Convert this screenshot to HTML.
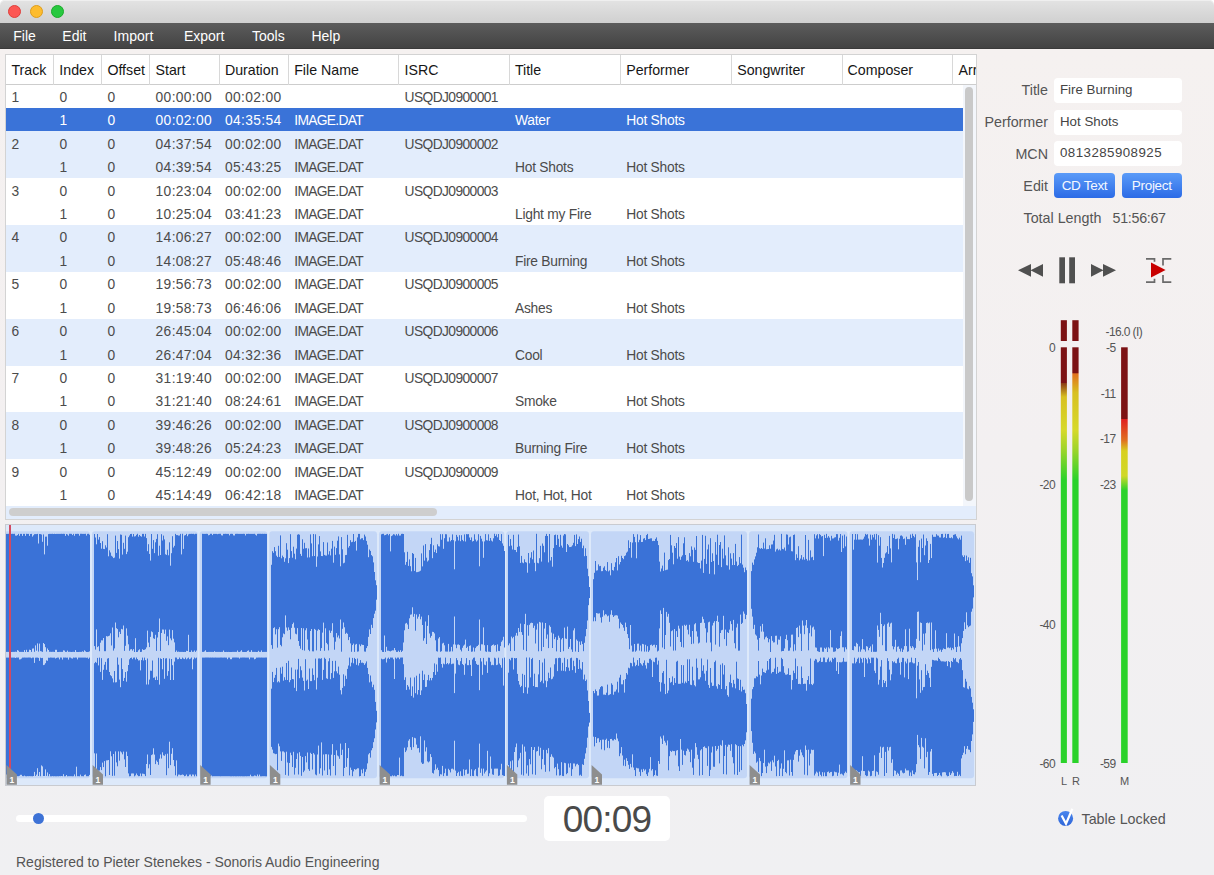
<!DOCTYPE html>
<html><head><meta charset="utf-8">
<style>
*{margin:0;padding:0;box-sizing:border-box}
html,body{width:1214px;height:875px;overflow:hidden}
body{background:linear-gradient(#f5f1f0 50px,#f3f0f1 450px,#f0f0f2 875px);font-family:"Liberation Sans",sans-serif;position:relative;color:#333}
.abs{position:absolute}
#titlebar{position:absolute;left:0;top:0;width:1214px;height:23px;background:linear-gradient(#e3e3e3,#d0d0d0);border-radius:5px 5px 0 0;box-shadow:inset 0 1px #efefef}
.tl{position:absolute;top:5.2px;width:13px;height:13px;border-radius:50%}
#menubar{position:absolute;left:0;top:23px;width:1214px;height:26px;background:linear-gradient(#5c5c5c,#434343);border-bottom:1px solid #3a3a3a}
.mi{position:absolute;top:4.3px;color:#fff;font-size:14px;line-height:18px}
#table{position:absolute;left:5px;top:54px;height:465.5px;background:#fff;border:1px solid #d3d3d3;overflow:hidden;width:971.5px}
#hdr{position:absolute;left:0;top:0;width:1000px;height:29.6px;background:#fff;border-bottom:1px solid #cdcdcd}
.hc{position:absolute;top:0;height:29.6px;border-right:1px solid #d8d8d8;font-size:14.2px;color:#161616;padding-left:5px;line-height:31px;white-space:nowrap;overflow:hidden}
#rows{position:absolute;left:0;top:29.6px;width:957px;height:422px}
.row{position:absolute;left:0;width:957px;height:23.42px}
.even{background:#fff}
.odd{background:#e3edfc}
.sel{background:#3a73d8}
.d{position:absolute;font-size:13.8px;color:#4b4b4b;line-height:23.42px;margin-top:1.4px;white-space:nowrap;letter-spacing:-0.25px}
.d.n{letter-spacing:0.35px}
.d.img{letter-spacing:-0.7px}
.d.isrc{letter-spacing:-0.6px}
.d.s{color:#fff}
#vscroll{position:absolute;left:957px;top:29.6px;width:14px;height:421px;background:#f3f6fb}
#vthumb{position:absolute;left:1.5px;top:2.5px;width:8px;height:414px;border-radius:4px;background:#c9c9c9}
#hscroll{position:absolute;left:0;top:450.5px;width:971px;height:14px;background:#e3edfc}
#hthumb{position:absolute;left:3.4px;top:2.4px;width:428px;height:8px;border-radius:4px;background:#cecece}
#wave{position:absolute;left:5px;top:523.7px;width:971px;height:262px;border:1px solid #c9cbd0;background:#dde9fa;overflow:hidden}
#slider{position:absolute;left:16px;top:815px;width:511px;height:7px;border-radius:4px;background:#fff}
#knob{position:absolute;left:32.5px;top:813.3px;width:11px;height:11px;border-radius:50%;background:#3d72d6}
#timebox{position:absolute;left:544px;top:796px;width:126px;height:45px;border-radius:5px;background:#fff}
#time{position:absolute;left:0;top:0.7px;width:126px;height:45px;text-align:center;font-size:37px;line-height:45px;color:#4a4a4a;letter-spacing:-0.8px}
#reg{position:absolute;left:16px;top:853px;font-size:14px;line-height:18px;color:#555;white-space:nowrap}
.lbl{position:absolute;font-size:14.3px;color:#555;text-align:right;line-height:18px;white-space:nowrap}
.inp{position:absolute;left:1054px;width:128px;height:25px;background:#fff;border-radius:4px;font-size:13.3px;color:#444;padding-left:6px;line-height:23px;white-space:nowrap}
.btn{position:absolute;top:172.5px;height:25px;border-radius:4px;background:linear-gradient(#5b9bf8,#2c6be6);color:#f4f8ff;font-size:13.5px;line-height:25px;text-align:center;letter-spacing:-0.3px}
.ml{position:absolute;font-size:12px;color:#555;line-height:12px;white-space:nowrap;letter-spacing:-0.6px}
</style></head><body>
<div style="position:absolute;left:0;top:0;width:1214px;height:8px;background:#fff"></div>
<div id="titlebar">
 <div class="tl" style="left:8.4px;background:#fc5753;border:0.5px solid #df3f3b"></div>
 <div class="tl" style="left:29.5px;background:#fdbc2e;border:0.5px solid #de9d1b"></div>
 <div class="tl" style="left:50.7px;background:#28c840;border:0.5px solid #1aab29"></div>
</div>
<div id="menubar">
 <div class="mi" style="left:13.3px">File</div>
 <div class="mi" style="left:62.3px">Edit</div>
 <div class="mi" style="left:113.6px">Import</div>
 <div class="mi" style="left:183.9px">Export</div>
 <div class="mi" style="left:252px">Tools</div>
 <div class="mi" style="left:311.4px">Help</div>
</div>

<div id="table">
 <div id="hdr"><div class="hc" style="left:0.4px;width:47.9px">Track</div><div class="hc" style="left:48.3px;width:48.1px">Index</div><div class="hc" style="left:96.4px;width:48.1px">Offset</div><div class="hc" style="left:144.5px;width:69.4px">Start</div><div class="hc" style="left:213.9px;width:69.3px">Duration</div><div class="hc" style="left:283.2px;width:110.3px">File Name</div><div class="hc" style="left:393.5px;width:110.4px">ISRC</div><div class="hc" style="left:503.9px;width:111.3px">Title</div><div class="hc" style="left:615.2px;width:111.0px">Performer</div><div class="hc" style="left:726.2px;width:110.4px">Songwriter</div><div class="hc" style="left:836.6px;width:110.9px">Composer</div><div class="hc" style="left:947.5px;width:47.4px">Arr</div></div>
 <div id="rows"><div class="row even" style="top:0.00px"></div><div class="row sel" style="top:23.42px"></div><div class="row odd" style="top:46.84px"></div><div class="row odd" style="top:70.26px"></div><div class="row even" style="top:93.68px"></div><div class="row even" style="top:117.10px"></div><div class="row odd" style="top:140.52px"></div><div class="row odd" style="top:163.94px"></div><div class="row even" style="top:187.36px"></div><div class="row even" style="top:210.78px"></div><div class="row odd" style="top:234.20px"></div><div class="row odd" style="top:257.62px"></div><div class="row even" style="top:281.04px"></div><div class="row even" style="top:304.46px"></div><div class="row odd" style="top:327.88px"></div><div class="row odd" style="top:351.30px"></div><div class="row even" style="top:374.72px"></div><div class="row even" style="top:398.14px"></div><div class="d n" style="left:5.5px;top:0.0px">1</div><div class="d n" style="left:53.4px;top:0.0px">0</div><div class="d n" style="left:101.5px;top:0.0px">0</div><div class="d n" style="left:149.6px;top:0.0px">00:00:00</div><div class="d n" style="left:219.0px;top:0.0px">00:02:00</div><div class="d isrc" style="left:398.6px;top:0.0px">USQDJ0900001</div><div class="d s n" style="left:53.4px;top:23.4px">1</div><div class="d s n" style="left:101.5px;top:23.4px">0</div><div class="d s n" style="left:149.6px;top:23.4px">00:02:00</div><div class="d s n" style="left:219.0px;top:23.4px">04:35:54</div><div class="d s img" style="left:288.3px;top:23.4px">IMAGE.DAT</div><div class="d s" style="left:509.0px;top:23.4px">Water</div><div class="d s" style="left:620.3px;top:23.4px">Hot Shots</div><div class="d n" style="left:5.5px;top:46.8px">2</div><div class="d n" style="left:53.4px;top:46.8px">0</div><div class="d n" style="left:101.5px;top:46.8px">0</div><div class="d n" style="left:149.6px;top:46.8px">04:37:54</div><div class="d n" style="left:219.0px;top:46.8px">00:02:00</div><div class="d isrc" style="left:398.6px;top:46.8px">USQDJ0900002</div><div class="d img" style="left:288.3px;top:46.8px">IMAGE.DAT</div><div class="d n" style="left:53.4px;top:70.3px">1</div><div class="d n" style="left:101.5px;top:70.3px">0</div><div class="d n" style="left:149.6px;top:70.3px">04:39:54</div><div class="d n" style="left:219.0px;top:70.3px">05:43:25</div><div class="d img" style="left:288.3px;top:70.3px">IMAGE.DAT</div><div class="d" style="left:509.0px;top:70.3px">Hot Shots</div><div class="d" style="left:620.3px;top:70.3px">Hot Shots</div><div class="d n" style="left:5.5px;top:93.7px">3</div><div class="d n" style="left:53.4px;top:93.7px">0</div><div class="d n" style="left:101.5px;top:93.7px">0</div><div class="d n" style="left:149.6px;top:93.7px">10:23:04</div><div class="d n" style="left:219.0px;top:93.7px">00:02:00</div><div class="d isrc" style="left:398.6px;top:93.7px">USQDJ0900003</div><div class="d img" style="left:288.3px;top:93.7px">IMAGE.DAT</div><div class="d n" style="left:53.4px;top:117.1px">1</div><div class="d n" style="left:101.5px;top:117.1px">0</div><div class="d n" style="left:149.6px;top:117.1px">10:25:04</div><div class="d n" style="left:219.0px;top:117.1px">03:41:23</div><div class="d img" style="left:288.3px;top:117.1px">IMAGE.DAT</div><div class="d" style="left:509.0px;top:117.1px">Light my Fire</div><div class="d" style="left:620.3px;top:117.1px">Hot Shots</div><div class="d n" style="left:5.5px;top:140.5px">4</div><div class="d n" style="left:53.4px;top:140.5px">0</div><div class="d n" style="left:101.5px;top:140.5px">0</div><div class="d n" style="left:149.6px;top:140.5px">14:06:27</div><div class="d n" style="left:219.0px;top:140.5px">00:02:00</div><div class="d isrc" style="left:398.6px;top:140.5px">USQDJ0900004</div><div class="d img" style="left:288.3px;top:140.5px">IMAGE.DAT</div><div class="d n" style="left:53.4px;top:163.9px">1</div><div class="d n" style="left:101.5px;top:163.9px">0</div><div class="d n" style="left:149.6px;top:163.9px">14:08:27</div><div class="d n" style="left:219.0px;top:163.9px">05:48:46</div><div class="d img" style="left:288.3px;top:163.9px">IMAGE.DAT</div><div class="d" style="left:509.0px;top:163.9px">Fire Burning</div><div class="d" style="left:620.3px;top:163.9px">Hot Shots</div><div class="d n" style="left:5.5px;top:187.4px">5</div><div class="d n" style="left:53.4px;top:187.4px">0</div><div class="d n" style="left:101.5px;top:187.4px">0</div><div class="d n" style="left:149.6px;top:187.4px">19:56:73</div><div class="d n" style="left:219.0px;top:187.4px">00:02:00</div><div class="d isrc" style="left:398.6px;top:187.4px">USQDJ0900005</div><div class="d img" style="left:288.3px;top:187.4px">IMAGE.DAT</div><div class="d n" style="left:53.4px;top:210.8px">1</div><div class="d n" style="left:101.5px;top:210.8px">0</div><div class="d n" style="left:149.6px;top:210.8px">19:58:73</div><div class="d n" style="left:219.0px;top:210.8px">06:46:06</div><div class="d img" style="left:288.3px;top:210.8px">IMAGE.DAT</div><div class="d" style="left:509.0px;top:210.8px">Ashes</div><div class="d" style="left:620.3px;top:210.8px">Hot Shots</div><div class="d n" style="left:5.5px;top:234.2px">6</div><div class="d n" style="left:53.4px;top:234.2px">0</div><div class="d n" style="left:101.5px;top:234.2px">0</div><div class="d n" style="left:149.6px;top:234.2px">26:45:04</div><div class="d n" style="left:219.0px;top:234.2px">00:02:00</div><div class="d isrc" style="left:398.6px;top:234.2px">USQDJ0900006</div><div class="d img" style="left:288.3px;top:234.2px">IMAGE.DAT</div><div class="d n" style="left:53.4px;top:257.6px">1</div><div class="d n" style="left:101.5px;top:257.6px">0</div><div class="d n" style="left:149.6px;top:257.6px">26:47:04</div><div class="d n" style="left:219.0px;top:257.6px">04:32:36</div><div class="d img" style="left:288.3px;top:257.6px">IMAGE.DAT</div><div class="d" style="left:509.0px;top:257.6px">Cool</div><div class="d" style="left:620.3px;top:257.6px">Hot Shots</div><div class="d n" style="left:5.5px;top:281.0px">7</div><div class="d n" style="left:53.4px;top:281.0px">0</div><div class="d n" style="left:101.5px;top:281.0px">0</div><div class="d n" style="left:149.6px;top:281.0px">31:19:40</div><div class="d n" style="left:219.0px;top:281.0px">00:02:00</div><div class="d isrc" style="left:398.6px;top:281.0px">USQDJ0900007</div><div class="d img" style="left:288.3px;top:281.0px">IMAGE.DAT</div><div class="d n" style="left:53.4px;top:304.5px">1</div><div class="d n" style="left:101.5px;top:304.5px">0</div><div class="d n" style="left:149.6px;top:304.5px">31:21:40</div><div class="d n" style="left:219.0px;top:304.5px">08:24:61</div><div class="d img" style="left:288.3px;top:304.5px">IMAGE.DAT</div><div class="d" style="left:509.0px;top:304.5px">Smoke</div><div class="d" style="left:620.3px;top:304.5px">Hot Shots</div><div class="d n" style="left:5.5px;top:327.9px">8</div><div class="d n" style="left:53.4px;top:327.9px">0</div><div class="d n" style="left:101.5px;top:327.9px">0</div><div class="d n" style="left:149.6px;top:327.9px">39:46:26</div><div class="d n" style="left:219.0px;top:327.9px">00:02:00</div><div class="d isrc" style="left:398.6px;top:327.9px">USQDJ0900008</div><div class="d img" style="left:288.3px;top:327.9px">IMAGE.DAT</div><div class="d n" style="left:53.4px;top:351.3px">1</div><div class="d n" style="left:101.5px;top:351.3px">0</div><div class="d n" style="left:149.6px;top:351.3px">39:48:26</div><div class="d n" style="left:219.0px;top:351.3px">05:24:23</div><div class="d img" style="left:288.3px;top:351.3px">IMAGE.DAT</div><div class="d" style="left:509.0px;top:351.3px">Burning Fire</div><div class="d" style="left:620.3px;top:351.3px">Hot Shots</div><div class="d n" style="left:5.5px;top:374.7px">9</div><div class="d n" style="left:53.4px;top:374.7px">0</div><div class="d n" style="left:101.5px;top:374.7px">0</div><div class="d n" style="left:149.6px;top:374.7px">45:12:49</div><div class="d n" style="left:219.0px;top:374.7px">00:02:00</div><div class="d isrc" style="left:398.6px;top:374.7px">USQDJ0900009</div><div class="d img" style="left:288.3px;top:374.7px">IMAGE.DAT</div><div class="d n" style="left:53.4px;top:398.1px">1</div><div class="d n" style="left:101.5px;top:398.1px">0</div><div class="d n" style="left:149.6px;top:398.1px">45:14:49</div><div class="d n" style="left:219.0px;top:398.1px">06:42:18</div><div class="d img" style="left:288.3px;top:398.1px">IMAGE.DAT</div><div class="d" style="left:509.0px;top:398.1px">Hot, Hot, Hot</div><div class="d" style="left:620.3px;top:398.1px">Hot Shots</div>
 </div>
 <div id="vscroll"><div id="vthumb"></div></div>
 <div id="hscroll"><div id="hthumb"></div></div>
</div>

<div id="wave">
<svg width="970" height="262" viewBox="6 524.7 970 262" style="position:absolute;left:0;top:0">
<rect x="4.4" y="531" width="85.6" height="247" rx="3" fill="#c3d6f6"/><rect x="92.0" y="531" width="105.6" height="247" rx="3" fill="#c3d6f6"/><rect x="199.6" y="531" width="67.7" height="247" rx="3" fill="#c3d6f6"/><rect x="269.3" y="531" width="107.7" height="247" rx="3" fill="#c3d6f6"/><rect x="379.0" y="531" width="125.3" height="247" rx="3" fill="#c3d6f6"/><rect x="506.3" y="531" width="82.7" height="247" rx="3" fill="#c3d6f6"/><rect x="591.0" y="531" width="156.0" height="247" rx="3" fill="#c3d6f6"/><rect x="749.0" y="531" width="98.5" height="247" rx="3" fill="#c3d6f6"/><rect x="849.5" y="531" width="124.5" height="247" rx="3" fill="#c3d6f6"/>
<path d="M6.5 533.6V651.6M6.5 657.3V774.2M7.5 533.6V651.6M7.5 657.3V775.9M8.5 533.5V651.6M8.5 657.3V775.9M9.5 533.5V651.7M9.5 657.2V775.9M10.5 539.5V650.2M10.5 657.2V774.3M11.5 533.6V651.7M11.5 657.3V775.9M12.5 533.5V651.6M12.5 657.3V775.9M13.5 533.6V651.6M13.5 657.3V776.0M14.5 533.5V651.6M14.5 657.3V776.0M15.5 535.3V651.4M15.5 657.7V776.0M16.5 535.4V651.6M16.5 657.2V776.0M17.5 534.8V649.8M17.5 657.3V775.9M18.5 533.6V650.4M18.5 657.2V775.9M19.5 535.5V651.6M19.5 659.2V775.5M20.5 533.6V651.6M20.5 659.0V774.5M21.5 533.6V651.6M21.5 658.3V774.5M22.5 535.6V651.6M22.5 657.3V775.8M23.5 533.6V651.7M23.5 657.3V775.9M24.5 533.6V649.8M24.5 657.2V775.3M25.5 535.6V651.7M25.5 657.3V775.9M26.5 533.5V649.5M26.5 657.3V776.0M27.5 533.6V651.7M27.5 657.3V775.8M28.5 533.6V651.6M28.5 657.2V775.9M29.5 535.6V649.4M29.5 657.2V775.8M30.5 533.7V649.7M30.5 657.3V775.9M31.5 533.6V651.6M31.5 657.9V775.9M32.5 536.3V648.3M32.5 657.3V776.0M33.5 535.0V648.1M33.5 657.3V775.7M34.5 533.9V651.5M34.5 662.6V771.6M35.5 533.8V645.1M35.5 657.4V775.7M36.5 533.8V650.4M36.5 657.3V774.3M37.5 533.6V643.1M37.5 657.3V767.9M38.5 543.2V651.3M38.5 657.6V775.7M39.5 533.7V643.3M39.5 660.6V771.7M40.5 533.8V650.8M40.5 657.4V775.9M41.5 534.2V651.1M41.5 657.8V765.1M42.5 541.5V651.6M42.5 657.6V766.1M43.5 534.1V642.7M43.5 664.8V775.7M44.5 554.1V643.8M44.5 664.4V775.7M45.5 536.4V646.9M45.5 662.9V769.1M46.5 536.3V651.3M46.5 660.1V775.6M47.5 545.4V648.2M47.5 660.5V772.1M48.5 533.8V649.7M48.5 657.4V775.9M49.5 533.6V651.5M49.5 657.5V773.8M50.5 533.6V651.5M50.5 657.2V776.0M51.5 533.6V651.6M51.5 657.3V776.0M52.5 533.5V651.5M52.5 657.4V775.8M53.5 533.7V651.5M53.5 657.4V776.0M54.5 533.5V651.7M54.5 657.3V775.9M55.5 533.7V649.5M55.5 658.2V776.0M56.5 533.6V649.5M56.5 657.6V776.0M57.5 533.6V651.7M57.5 657.3V775.9M58.5 533.6V651.7M58.5 657.3V776.0M59.5 533.6V651.6M59.5 659.1V775.8M60.5 533.6V651.6M60.5 657.2V775.9M61.5 533.5V651.6M61.5 657.3V775.7M62.5 533.6V651.6M62.5 659.3V775.9M63.5 533.5V650.0M63.5 657.2V773.9M64.5 533.6V650.3M64.5 657.3V776.0M65.5 535.6V651.6M65.5 657.2V775.9M66.5 533.7V651.6M66.5 657.4V774.7M67.5 534.2V650.3M67.5 657.3V776.0M68.5 535.4V651.6M68.5 659.3V775.9M69.5 533.5V651.5M69.5 657.2V775.9M70.5 533.5V651.6M70.5 657.3V775.9M71.5 533.6V651.7M71.5 658.0V775.9M72.5 534.8V651.6M72.5 658.3V776.0M73.5 533.6V651.5M73.5 657.2V775.9M74.5 535.5V651.7M74.5 657.4V774.1M75.5 533.6V649.8M75.5 657.2V776.0M76.5 533.6V651.6M76.5 657.3V766.4M77.5 533.5V651.7M77.5 659.1V775.9M78.5 533.6V651.7M78.5 657.3V775.9M79.5 535.4V651.6M79.5 657.3V776.0M80.5 533.5V651.6M80.5 657.3V774.3M81.5 533.5V651.6M81.5 657.3V775.9M82.5 533.6V651.0M82.5 657.3V775.9M83.5 533.6V651.6M83.5 657.3V776.0M84.5 533.6V650.0M84.5 657.3V774.6M85.5 533.5V651.0M85.5 657.3V774.2M86.5 535.3V651.7M86.5 657.5V775.9M87.5 533.6V651.7M87.5 657.3V775.9M88.5 533.5V651.6M88.5 658.5V775.9M89.5 534.4V651.1M89.5 657.3V774.6M94.5 533.7V645.8M94.5 662.9V753.0M95.5 537.2V649.3M95.5 661.6V775.6M96.5 544.0V629.1M96.5 662.5V753.2M97.5 533.7V646.8M97.5 657.6V775.6M98.5 539.3V645.9M98.5 665.1V770.4M99.5 536.8V650.9M99.5 657.3V770.2M100.5 542.7V642.4M100.5 671.6V766.8M101.5 548.4V640.0M101.5 657.9V769.8M102.5 540.9V640.1M102.5 679.6V762.3M103.5 548.6V637.7M103.5 669.5V766.8M104.5 548.8V650.9M104.5 664.4V760.8M105.5 545.0V650.9M105.5 661.6V776.0M106.5 547.2V635.8M106.5 669.5V760.1M107.5 533.9V636.2M107.5 658.3V760.0M108.5 556.0V635.8M108.5 657.8V759.7M109.5 550.0V635.3M109.5 671.7V774.7M110.5 552.2V633.0M110.5 674.9V751.0M111.5 555.5V645.2M111.5 675.9V756.0M112.5 556.4V627.2M112.5 678.1V775.6M113.5 557.8V650.3M113.5 682.1V753.7M114.5 557.3V648.1M114.5 670.7V775.4M115.5 535.3V622.2M115.5 682.1V751.1M116.5 552.6V627.9M116.5 681.9V762.1M117.5 540.7V628.8M117.5 657.2V766.0M118.5 548.8V637.0M118.5 664.4V751.1M119.5 558.3V631.5M119.5 679.3V760.4M120.5 534.2V633.7M120.5 686.9V751.1M121.5 534.5V628.6M121.5 657.9V752.1M122.5 554.3V629.1M122.5 668.8V754.0M123.5 542.5V625.2M123.5 680.7V751.3M124.5 548.5V650.6M124.5 677.6V759.1M125.5 535.3V645.5M125.5 671.7V766.7M126.5 553.8V628.1M126.5 681.4V751.4M127.5 551.4V635.4M127.5 670.9V755.7M128.5 536.9V644.0M128.5 664.7V773.1M129.5 535.2V650.5M129.5 659.0V776.0M130.5 533.7V649.1M130.5 657.7V775.8M131.5 533.6V648.8M131.5 657.3V773.2M132.5 536.3V650.3M132.5 658.9V773.1M133.5 533.7V648.8M133.5 657.3V773.2M134.5 536.2V651.7M134.5 657.2V776.0M135.5 535.9V637.9M135.5 659.2V775.1M136.5 534.5V651.7M136.5 657.2V773.2M137.5 533.5V651.6M137.5 658.7V774.9M138.5 536.4V650.0M138.5 660.2V775.9M139.5 534.7V649.0M139.5 660.0V775.8M140.5 535.8V651.7M140.5 670.1V773.2M141.5 536.4V651.5M141.5 659.8V775.9M142.5 533.6V648.9M142.5 657.3V773.3M143.5 533.6V649.7M143.5 660.2V773.5M144.5 536.2V649.5M144.5 657.3V773.9M145.5 533.6V648.9M145.5 659.8V775.8M146.5 537.8V647.1M146.5 684.2V763.7M147.5 550.9V630.3M147.5 658.2V754.2M148.5 543.9V642.3M148.5 684.2V768.0M149.5 553.6V646.8M149.5 679.3V764.0M150.5 560.3V636.6M150.5 670.4V774.7M151.5 533.7V631.1M151.5 670.5V754.8M152.5 548.5V631.9M152.5 660.2V754.1M153.5 539.8V638.0M153.5 677.5V748.0M154.5 552.8V638.6M154.5 677.1V754.3M155.5 542.0V634.5M155.5 679.7V763.8M156.5 538.6V650.6M156.5 676.2V760.2M157.5 533.9V637.2M157.5 679.7V761.6M158.5 555.4V631.7M158.5 657.5V764.5M159.5 545.4V618.2M159.5 684.3V758.4M160.5 554.7V650.7M160.5 658.1V754.2M161.5 533.9V632.7M161.5 658.7V758.2M162.5 540.2V629.2M162.5 669.0V752.0M163.5 535.3V629.3M163.5 657.7V755.0M164.5 539.1V633.5M164.5 678.5V755.5M165.5 554.0V629.3M165.5 658.2V754.0M166.5 554.6V640.5M166.5 657.9V774.9M167.5 549.4V636.1M167.5 675.5V753.4M168.5 555.0V644.9M168.5 670.8V767.9M169.5 542.0V629.3M169.5 658.3V741.4M170.5 565.4V638.1M170.5 679.7V764.8M171.5 552.9V640.0M171.5 658.7V753.5M172.5 535.9V629.8M172.5 664.9V747.9M173.5 547.2V638.4M173.5 679.7V759.7M174.5 545.5V642.1M174.5 661.3V765.9M175.5 533.6V651.6M175.5 657.2V775.0M176.5 534.8V650.2M176.5 657.3V760.1M177.5 534.8V651.6M177.5 659.0V776.0M178.5 535.3V651.3M178.5 658.8V774.3M179.5 535.2V651.6M179.5 657.2V774.3M180.5 533.6V651.6M180.5 658.6V774.9M181.5 554.1V651.6M181.5 658.8V774.6M182.5 533.5V651.6M182.5 657.3V774.2M183.5 548.6V651.7M183.5 658.3V774.6M184.5 535.2V651.6M184.5 658.8V775.9M185.5 534.8V651.7M185.5 657.3V775.5M186.5 533.6V650.5M186.5 659.0V774.2M187.5 535.9V650.7M187.5 658.1V776.0M188.5 534.1V634.5M188.5 657.3V775.9M189.5 533.6V651.7M189.5 658.9V774.3M190.5 533.6V651.7M190.5 658.3V774.2M191.5 533.5V650.1M191.5 657.2V775.9M192.5 533.6V651.6M192.5 669.0V774.2M193.5 533.5V651.4M193.5 659.0V774.3M194.5 534.0V650.2M194.5 657.2V776.0M195.5 533.5V651.6M195.5 658.1V774.2M196.5 533.5V650.3M196.5 657.3V775.9M202.5 533.5V651.6M202.5 657.3V776.0M203.5 533.6V651.6M203.5 657.3V775.9M204.5 533.6V651.1M204.5 657.3V776.0M205.5 533.6V650.0M205.5 657.2V775.9M206.5 533.5V651.6M206.5 657.2V775.9M207.5 533.6V651.7M207.5 657.2V775.9M208.5 535.0V651.6M208.5 657.2V775.3M209.5 534.6V651.6M209.5 657.3V775.9M210.5 533.5V651.6M210.5 657.2V775.9M211.5 533.5V651.6M211.5 657.3V775.2M212.5 534.8V651.6M212.5 657.2V776.0M213.5 533.6V651.7M213.5 657.3V775.9M214.5 533.6V650.9M214.5 657.3V775.9M215.5 533.6V651.6M215.5 657.2V775.9M216.5 533.6V651.6M216.5 657.3V775.9M217.5 533.9V651.6M217.5 657.3V775.9M218.5 533.6V651.6M218.5 657.3V775.9M219.5 533.5V651.6M219.5 657.3V775.9M220.5 533.5V651.7M220.5 657.2V776.0M221.5 535.0V651.6M221.5 657.2V775.9M222.5 535.2V651.6M222.5 657.3V775.9M223.5 533.6V650.2M223.5 657.3V775.9M224.5 533.6V651.6M224.5 657.2V775.9M225.5 533.5V651.7M225.5 657.3V775.9M226.5 533.6V651.6M226.5 657.3V775.9M227.5 533.6V651.7M227.5 658.9V775.9M228.5 533.6V651.6M228.5 657.3V775.9M229.5 535.1V651.7M229.5 657.3V775.9M230.5 533.6V651.7M230.5 658.9V776.0M231.5 533.5V651.7M231.5 658.9V776.0M232.5 533.6V651.6M232.5 657.3V775.9M233.5 535.1V651.6M233.5 657.2V776.0M234.5 535.2V651.6M234.5 657.2V775.9M235.5 533.6V651.6M235.5 657.2V776.0M236.5 533.5V651.6M236.5 657.2V776.0M237.5 533.5V650.2M237.5 657.3V775.9M238.5 533.6V651.6M238.5 657.3V776.0M239.5 533.6V651.7M239.5 658.3V775.9M240.5 533.6V651.1M240.5 657.3V776.0M241.5 533.6V649.9M241.5 657.3V775.9M242.5 533.6V651.6M242.5 657.2V776.0M243.5 533.5V651.7M243.5 657.2V776.0M244.5 533.6V651.7M244.5 657.2V776.0M245.5 535.2V651.7M245.5 657.3V775.9M246.5 533.6V651.6M246.5 657.3V776.0M247.5 533.6V650.6M247.5 657.3V775.9M248.5 533.5V650.1M248.5 657.3V775.9M249.5 533.6V651.6M249.5 659.0V775.9M250.5 533.6V651.6M250.5 657.2V774.4M251.5 533.6V649.9M251.5 657.2V775.9M252.5 533.6V651.6M252.5 657.3V776.0M253.5 533.6V651.6M253.5 657.3V775.9M254.5 533.5V651.6M254.5 659.0V775.2M255.5 534.4V651.6M255.5 658.5V775.4M256.5 535.3V651.7M256.5 657.3V775.9M257.5 533.6V651.6M257.5 657.3V774.2M258.5 533.5V650.5M258.5 657.2V775.9M259.5 533.5V651.6M259.5 657.2V774.3M260.5 533.5V651.6M260.5 657.3V776.0M261.5 533.6V650.1M261.5 657.2V776.0M262.5 533.5V651.7M262.5 657.3V775.9M263.5 533.6V651.6M263.5 657.3V775.9M264.5 533.5V651.6M264.5 657.3V775.9M265.5 533.6V651.6M265.5 657.2V776.0M266.5 533.6V651.6M266.5 657.2V776.0M271.5 564.5V644.8M271.5 688.4V746.6M272.5 550.9V648.5M272.5 671.6V749.3M273.5 552.5V627.8M273.5 681.8V752.9M274.5 546.8V627.0M274.5 677.5V753.3M275.5 550.9V634.1M275.5 674.6V753.9M276.5 555.4V628.9M276.5 667.6V753.6M277.5 556.8V647.3M277.5 682.0V770.0M278.5 545.5V628.9M278.5 680.9V743.3M279.5 556.6V626.9M279.5 682.1V746.0M280.5 535.1V644.6M280.5 667.2V751.1M281.5 558.0V646.0M281.5 673.4V760.6M282.5 555.3V637.0M282.5 666.4V751.1M283.5 556.8V633.2M283.5 680.4V751.1M284.5 561.5V633.9M284.5 676.9V752.1M285.5 558.0V615.1M285.5 679.6V774.6M286.5 542.9V627.2M286.5 662.7V751.4M287.5 549.4V630.4M287.5 679.7V762.2M288.5 562.8V627.1M288.5 660.5V775.4M289.5 557.8V629.6M289.5 681.9V762.7M290.5 533.9V639.0M290.5 679.8V752.4M291.5 550.8V627.6M291.5 667.2V754.9M292.5 557.4V623.8M292.5 678.7V766.7M293.5 546.4V622.3M293.5 679.0V751.5M294.5 553.4V627.4M294.5 687.5V774.3M295.5 559.0V633.4M295.5 669.3V767.5M296.5 548.3V634.0M296.5 690.8V758.7M297.5 534.4V627.8M297.5 669.2V753.1M298.5 533.9V640.7M298.5 658.6V774.2M299.5 534.4V645.6M299.5 677.9V751.9M300.5 553.6V648.4M300.5 666.0V755.6M301.5 555.6V627.7M301.5 670.0V775.5M302.5 539.0V649.8M302.5 677.3V756.7M303.5 548.5V628.0M303.5 680.6V771.9M304.5 542.5V650.3M304.5 690.2V770.3M305.5 548.0V630.0M305.5 658.9V755.8M306.5 547.8V627.9M306.5 680.4V762.1M307.5 557.2V639.2M307.5 679.3V752.2M308.5 548.2V649.5M308.5 688.7V768.9M309.5 557.1V650.9M309.5 668.2V770.6M310.5 534.1V630.7M310.5 680.8V752.5M311.5 543.1V628.7M311.5 680.8V753.7M312.5 555.9V651.0M312.5 668.1V769.2M313.5 533.7V651.1M313.5 674.6V752.8M314.5 555.7V628.6M314.5 679.9V754.2M315.5 534.0V629.5M315.5 658.3V774.2M316.5 566.5V650.1M316.5 689.2V775.0M317.5 556.2V630.4M317.5 677.4V754.2M318.5 544.1V628.9M318.5 658.2V745.3M319.5 535.8V629.7M319.5 658.1V773.4M320.5 551.1V650.6M320.5 658.5V768.0M321.5 555.7V647.8M321.5 657.9V742.1M322.5 555.8V632.3M322.5 679.6V775.2M323.5 541.8V622.3M323.5 669.6V754.2M324.5 554.6V650.5M324.5 657.4V770.2M325.5 555.2V628.0M325.5 658.6V753.9M326.5 555.3V642.6M326.5 678.0V753.9M327.5 542.2V644.0M327.5 678.6V774.7M328.5 554.2V650.1M328.5 661.0V754.2M329.5 550.9V630.1M329.5 657.9V769.1M330.5 555.1V632.6M330.5 678.9V775.3M331.5 548.4V630.5M331.5 672.8V754.4M332.5 540.6V622.9M332.5 660.6V743.8M333.5 562.4V637.0M333.5 677.6V765.7M334.5 546.3V649.4M334.5 671.0V754.7M335.5 554.5V641.4M335.5 660.5V775.0M336.5 547.8V632.8M336.5 671.0V750.0M337.5 540.4V637.1M337.5 673.0V755.2M338.5 536.1V635.2M338.5 666.3V756.1M339.5 554.1V638.2M339.5 674.4V758.5M340.5 566.0V619.2M340.5 689.9V743.3M341.5 536.8V651.4M341.5 694.1V754.7M342.5 549.0V628.5M342.5 687.6V749.4M343.5 563.0V622.2M343.5 674.0V775.8M344.5 562.4V627.0M344.5 685.9V767.7M345.5 554.8V633.6M345.5 675.4V742.7M346.5 554.6V632.5M346.5 678.6V766.6M347.5 534.5V633.5M347.5 668.6V757.8M348.5 547.3V639.8M348.5 665.2V747.8M349.5 545.7V636.8M349.5 657.3V775.1M350.5 539.9V643.1M350.5 666.1V767.3M351.5 541.9V651.5M351.5 662.4V769.6M352.5 541.5V644.8M352.5 657.6V775.9M353.5 533.7V643.3M353.5 663.0V771.1M354.5 541.6V651.6M354.5 657.6V768.7M355.5 540.6V644.3M355.5 658.7V769.4M356.5 550.3V643.6M356.5 664.5V768.9M357.5 537.1V651.4M357.5 658.2V768.0M358.5 533.6V651.1M358.5 665.2V768.0M359.5 533.6V644.1M359.5 662.8V776.0M360.5 539.0V645.9M360.5 659.8V775.7M361.5 538.0V644.1M361.5 662.5V769.3M362.5 537.9V644.6M362.5 662.3V773.0M363.5 539.8V644.7M363.5 662.8V768.5M364.5 534.3V651.2M364.5 664.6V775.8M365.5 536.2V651.4M365.5 663.1V771.5M366.5 540.6V647.8M366.5 661.1V769.0M367.5 544.4V645.8M367.5 667.6V763.1M368.5 556.9V636.6M368.5 673.8V754.1M369.5 549.2V629.1M369.5 682.1V752.8M370.5 550.6V633.7M370.5 675.2V757.3M371.5 554.8V624.5M371.5 681.3V750.0M372.5 556.0V627.6M372.5 686.9V747.8M373.5 562.1V617.8M373.5 684.4V741.9M374.5 571.7V613.4M374.5 689.5V738.0M375.5 580.0V610.4M375.5 701.6V729.2M376.5 584.9V599.4M376.5 710.5V722.1M381.5 534.0V649.9M381.5 658.4V774.4M382.5 533.6V651.6M382.5 659.0V775.9M383.5 533.5V651.7M383.5 658.9V774.5M384.5 535.0V635.2M384.5 658.5V774.2M385.5 534.7V651.6M385.5 657.3V774.3M386.5 534.1V646.5M386.5 662.2V775.1M387.5 533.6V650.4M387.5 658.3V774.6M388.5 535.0V650.4M388.5 657.3V776.0M389.5 533.7V650.8M389.5 658.7V775.9M390.5 551.1V651.1M390.5 657.2V775.9M391.5 535.8V650.5M391.5 657.3V776.0M392.5 535.1V650.0M392.5 657.3V775.1M393.5 533.9V650.1M393.5 659.0V775.9M394.5 534.2V647.7M394.5 678.7V775.2M395.5 535.3V649.9M395.5 657.3V776.0M396.5 533.8V651.6M396.5 658.4V776.0M397.5 535.2V651.6M397.5 657.3V774.7M398.5 533.5V650.4M398.5 657.3V774.8M399.5 535.3V651.7M399.5 658.9V757.3M400.5 535.2V649.9M400.5 657.3V775.8M401.5 533.6V651.7M401.5 657.2V775.3M402.5 533.5V650.5M402.5 657.2V775.9M403.5 533.7V642.2M403.5 663.9V775.9M404.5 552.0V630.0M404.5 679.6V747.4M405.5 564.5V623.3M405.5 677.0V751.8M406.5 561.6V622.6M406.5 689.6V750.2M407.5 551.5V624.2M407.5 684.7V747.0M408.5 565.6V628.7M408.5 686.3V740.4M409.5 559.1V618.0M409.5 689.2V738.9M410.5 565.9V614.4M410.5 677.3V746.9M411.5 571.0V614.1M411.5 695.6V749.6M412.5 552.7V607.0M412.5 686.1V736.8M413.5 553.6V616.5M413.5 697.3V746.9M414.5 570.6V613.6M414.5 677.1V737.5M415.5 557.6V630.4M415.5 692.9V738.0M416.5 571.9V614.2M416.5 675.4V744.3M417.5 571.8V618.4M417.5 694.2V748.0M418.5 571.5V616.4M418.5 689.7V747.7M419.5 571.1V613.8M419.5 673.4V752.2M420.5 570.4V619.0M420.5 694.7V736.0M421.5 553.1V616.3M421.5 690.1V762.2M422.5 566.1V624.7M422.5 670.4V763.7M423.5 545.2V640.4M423.5 679.7V763.3M424.5 560.3V637.9M424.5 674.1V740.1M425.5 543.8V621.2M425.5 686.7V751.2M426.5 557.4V643.7M426.5 686.5V747.0M427.5 561.2V625.6M427.5 679.8V761.1M428.5 560.1V614.9M428.5 674.6V762.1M429.5 549.8V633.2M429.5 680.2V761.1M430.5 543.8V637.4M430.5 677.7V753.8M431.5 537.5V635.6M431.5 680.0V756.8M432.5 557.9V631.5M432.5 677.6V772.6M433.5 545.0V631.7M433.5 671.7V773.3M434.5 551.8V633.1M434.5 663.1V769.9M435.5 549.3V640.0M435.5 674.6V764.0M436.5 552.7V650.9M436.5 664.1V769.0M437.5 544.0V651.3M437.5 671.4V767.4M438.5 545.9V638.2M438.5 657.3V769.8M439.5 546.2V636.8M439.5 657.6V775.9M440.5 533.9V651.5M440.5 657.3V773.9M441.5 539.4V650.9M441.5 663.7V774.2M442.5 533.9V643.2M442.5 667.3V765.6M443.5 548.5V642.5M443.5 663.3V775.8M444.5 537.9V645.0M444.5 664.0V772.9M445.5 533.9V651.2M445.5 657.3V768.4M446.5 534.0V651.3M446.5 663.8V775.5M447.5 541.2V651.3M447.5 662.7V775.5M448.5 541.2V643.6M448.5 664.1V768.5M449.5 537.1V651.4M449.5 663.0V769.9M450.5 541.0V651.1M450.5 657.8V772.1M451.5 539.7V646.6M451.5 663.9V768.5M452.5 534.1V651.1M452.5 663.4V768.3M453.5 539.9V644.1M453.5 663.3V769.2M454.5 569.0V616.2M454.5 692.8V740.4M455.5 541.0V644.3M455.5 673.3V770.3M456.5 534.6V647.9M456.5 657.8V775.7M457.5 536.5V644.4M457.5 659.9V772.8M458.5 540.2V644.1M458.5 664.3V771.5M459.5 534.9V644.8M459.5 664.9V775.6M460.5 540.9V649.4M460.5 660.9V771.0M461.5 534.9V651.1M461.5 657.6V775.6M462.5 539.6V647.5M462.5 663.7V775.9M463.5 540.9V645.4M463.5 664.8V769.0M464.5 534.1V644.3M464.5 674.5V775.1M465.5 541.2V639.3M465.5 663.3V769.6M466.5 533.8V647.7M466.5 657.8V769.2M467.5 534.0V646.4M467.5 664.9V773.6M468.5 533.8V650.7M468.5 664.9V773.3M469.5 537.2V645.6M469.5 659.8V759.2M470.5 539.7V645.1M470.5 664.6V775.8M471.5 537.1V651.5M471.5 675.7V769.0M472.5 541.2V651.2M472.5 659.2V775.6M473.5 540.7V647.2M473.5 657.5V775.8M474.5 534.0V651.3M474.5 657.2V770.1M475.5 539.2V647.8M475.5 660.8V768.7M476.5 541.2V646.3M476.5 663.6V775.5M477.5 540.1V645.7M477.5 664.6V776.0M478.5 533.9V644.5M478.5 664.5V767.3M479.5 566.0V619.2M479.5 689.9V743.3M480.5 535.6V650.4M480.5 657.8V772.5M481.5 538.4V644.0M481.5 661.2V768.3M482.5 541.1V644.1M482.5 674.5V775.5M483.5 557.5V627.1M483.5 657.6V768.3M484.5 541.1V644.9M484.5 664.3V773.2M485.5 533.8V651.1M485.5 664.9V771.4M486.5 539.9V651.6M486.5 661.1V770.1M487.5 540.2V644.8M487.5 672.6V750.5M488.5 534.0V651.3M488.5 657.3V775.9M489.5 540.6V651.4M489.5 657.5V773.0M490.5 537.7V651.7M490.5 661.4V756.2M491.5 540.3V645.5M491.5 664.9V768.4M492.5 541.2V644.7M492.5 664.5V774.1M493.5 538.0V644.1M493.5 664.9V774.6M494.5 533.5V645.3M494.5 657.4V768.4M495.5 535.7V644.7M495.5 658.1V768.3M496.5 534.0V651.3M496.5 664.8V768.3M497.5 537.0V644.1M497.5 664.4V768.3M498.5 533.7V650.6M498.5 657.4V775.6M499.5 539.7V650.8M499.5 663.2V775.1M500.5 540.7V645.8M500.5 664.8V769.2M501.5 533.8V641.5M501.5 667.4V763.5M502.5 543.1V640.1M502.5 658.0V774.8M503.5 545.5V636.5M503.5 685.3V775.4M504.5 550.7V647.2M504.5 657.3V775.7M508.5 534.5V645.0M508.5 672.4V764.7M509.5 545.9V643.1M509.5 658.6V769.6M510.5 538.7V650.8M510.5 660.0V761.0M511.5 545.3V636.3M511.5 657.5V775.5M512.5 549.2V638.0M512.5 657.5V760.1M513.5 534.5V636.6M513.5 669.2V775.2M514.5 549.6V650.6M514.5 657.7V751.7M515.5 549.7V635.3M515.5 658.1V746.9M516.5 551.8V632.6M516.5 657.7V743.2M517.5 546.6V635.4M517.5 673.6V766.9M518.5 534.2V627.7M518.5 680.7V760.1M519.5 546.0V631.6M519.5 684.3V758.1M520.5 562.6V623.3M520.5 686.8V752.5M521.5 555.6V631.8M521.5 685.6V774.4M522.5 562.2V634.6M522.5 673.5V744.1M523.5 562.9V649.5M523.5 692.8V775.2M524.5 559.0V623.8M524.5 674.6V746.3M525.5 561.8V613.5M525.5 686.9V751.3M526.5 562.3V650.8M526.5 657.2V773.2M527.5 572.4V624.9M527.5 693.4V765.0M528.5 552.7V635.4M528.5 687.3V775.5M529.5 563.0V624.5M529.5 657.2V758.8M530.5 557.4V622.9M530.5 677.1V764.0M531.5 551.9V622.4M531.5 658.8V746.7M532.5 559.0V622.7M532.5 657.6V774.0M533.5 550.2V627.6M533.5 685.7V749.7M534.5 562.5V625.4M534.5 673.4V746.8M535.5 570.9V643.2M535.5 686.8V774.5M536.5 533.5V629.3M536.5 686.7V751.2M537.5 562.5V623.3M537.5 686.9V750.7M538.5 563.0V651.0M538.5 674.1V746.3M539.5 557.9V621.6M539.5 659.7V755.4M540.5 545.5V622.2M540.5 681.8V747.5M541.5 561.3V650.8M541.5 680.4V769.0M542.5 543.2V622.2M542.5 662.2V758.8M543.5 545.5V646.7M543.5 683.0V749.6M544.5 552.0V628.3M544.5 658.3V764.5M545.5 535.6V622.7M545.5 680.3V771.5M546.5 533.6V638.4M546.5 686.9V749.6M547.5 535.7V634.2M547.5 680.9V753.0M548.5 562.1V647.8M548.5 672.4V747.9M549.5 533.7V625.1M549.5 677.8V771.1M550.5 560.2V626.6M550.5 667.2V756.6M551.5 556.7V632.3M551.5 679.0V754.0M552.5 566.4V647.7M552.5 678.4V756.3M553.5 547.8V633.4M553.5 676.3V757.3M554.5 534.8V638.8M554.5 664.0V768.0M555.5 534.3V636.9M555.5 658.0V766.7M556.5 544.7V651.1M556.5 657.9V775.1M557.5 534.6V639.6M557.5 670.8V763.3M558.5 538.5V635.4M558.5 657.8V768.9M559.5 546.6V637.5M559.5 657.4V775.3M560.5 534.5V651.7M560.5 657.8V774.9M561.5 545.3V639.1M561.5 670.4V761.9M562.5 547.4V637.7M562.5 662.5V775.6M563.5 535.2V650.9M563.5 670.5V775.8M564.5 533.7V627.3M564.5 657.5V762.5M565.5 534.1V638.2M565.5 671.0V762.9M566.5 551.7V638.6M566.5 666.7V773.9M567.5 543.7V626.3M567.5 658.9V772.8M568.5 545.0V648.6M568.5 667.3V763.2M569.5 546.8V646.6M569.5 670.5V767.2M570.5 546.7V638.7M570.5 657.9V762.9M571.5 546.3V649.2M571.5 657.4V775.6M572.5 545.0V651.6M572.5 669.8V768.9M573.5 542.5V630.1M573.5 660.4V763.2M574.5 534.6V628.0M574.5 665.9V763.2M575.5 545.8V651.2M575.5 672.5V766.1M576.5 534.1V639.2M576.5 657.6V764.1M577.5 543.7V640.5M577.5 657.9V763.5M578.5 538.8V651.7M578.5 668.7V764.8M579.5 536.2V641.3M579.5 659.5V775.2M580.5 541.6V644.6M580.5 668.1V774.4M581.5 538.4V641.0M581.5 669.3V775.6M582.5 547.9V643.8M582.5 661.8V764.0M583.5 545.3V650.9M583.5 679.1V764.7M584.5 555.9V642.5M584.5 674.3V758.5M585.5 548.0V636.0M585.5 680.7V753.1M586.5 555.6V628.7M586.5 679.3V747.4M587.5 568.4V620.2M587.5 690.2V737.4M588.5 575.9V604.9M588.5 700.7V726.2M589.5 586.7V597.8M589.5 712.6V722.3M593.5 578.9V621.0M593.5 690.7V736.4M594.5 572.5V617.0M594.5 692.9V746.1M595.5 560.7V620.9M595.5 689.1V736.7M596.5 570.3V612.7M596.5 690.8V742.7M597.5 570.0V613.1M597.5 695.3V738.1M598.5 564.1V613.3M598.5 695.2V737.9M599.5 565.9V613.0M599.5 689.0V741.9M600.5 565.6V617.2M600.5 686.8V739.8M601.5 570.9V622.3M601.5 685.8V749.1M602.5 570.8V616.5M602.5 686.2V739.3M603.5 567.4V610.0M603.5 694.3V739.3M604.5 566.0V615.1M604.5 694.3V750.0M605.5 569.8V613.8M605.5 694.6V739.6M606.5 570.8V614.3M606.5 692.4V738.4M607.5 561.8V616.0M607.5 684.3V747.5M608.5 571.1V615.3M608.5 694.9V740.6M609.5 570.1V621.5M609.5 694.4V747.9M610.5 575.0V614.3M610.5 693.8V738.7M611.5 562.9V610.0M611.5 683.0V738.6M612.5 569.7V614.8M612.5 684.5V740.1M613.5 570.3V616.7M613.5 694.4V740.2M614.5 566.6V615.4M614.5 691.4V738.8M615.5 562.0V615.0M615.5 691.2V739.5M616.5 557.7V614.9M616.5 689.2V733.2M617.5 570.1V615.3M617.5 681.4V738.2M618.5 555.9V618.4M618.5 692.2V741.0M619.5 564.1V628.1M619.5 677.3V755.9M620.5 561.7V622.2M620.5 674.5V753.0M621.5 555.5V623.6M621.5 684.0V746.8M622.5 557.7V624.7M622.5 684.0V755.2M623.5 558.9V627.3M623.5 679.8V765.4M624.5 555.8V630.6M624.5 692.3V759.4M625.5 555.1V622.3M625.5 678.8V765.9M626.5 552.4V626.8M626.5 672.7V757.9M627.5 551.3V633.8M627.5 674.3V760.7M628.5 540.0V637.8M628.5 667.4V764.5M629.5 547.7V648.9M629.5 668.0V768.6M630.5 541.8V624.7M630.5 662.5V763.6M631.5 557.4V645.3M631.5 662.9V767.0M632.5 542.3V651.4M632.5 666.0V754.0M633.5 533.8V651.2M633.5 657.3V767.2M634.5 536.6V643.7M634.5 662.2V769.8M635.5 541.9V651.4M635.5 665.9V775.8M636.5 558.0V650.3M636.5 664.6V767.5M637.5 534.0V643.4M637.5 659.8V768.0M638.5 541.9V643.3M638.5 665.5V768.1M639.5 539.5V650.3M639.5 657.7V771.5M640.5 534.8V645.2M640.5 662.8V775.6M641.5 541.7V651.1M641.5 664.1V769.2M642.5 541.6V643.6M642.5 665.4V771.8M643.5 538.4V644.0M643.5 662.6V768.6M644.5 537.8V651.3M644.5 660.1V770.3M645.5 539.8V644.5M645.5 665.0V769.1M646.5 534.8V651.3M646.5 668.3V773.9M647.5 533.6V645.9M647.5 662.4V775.7M648.5 538.7V651.6M648.5 662.8V772.1M649.5 538.5V650.1M649.5 658.5V768.5M650.5 538.1V644.8M650.5 658.4V756.8M651.5 538.0V644.3M651.5 659.9V770.2M652.5 540.8V645.6M652.5 676.7V768.8M653.5 540.5V644.6M653.5 661.3V776.0M654.5 540.7V644.4M654.5 661.9V774.7M655.5 538.6V647.2M655.5 657.5V770.0M656.5 537.1V644.7M656.5 657.3V775.2M657.5 540.6V651.2M657.5 664.3V775.6M658.5 544.8V650.4M658.5 660.3V760.7M659.5 561.3V628.1M659.5 681.7V763.6M660.5 571.2V610.1M660.5 691.3V736.2M661.5 568.2V613.7M661.5 682.2V738.2M662.5 565.3V647.2M662.5 672.6V743.7M663.5 570.6V607.6M663.5 670.8V735.2M664.5 552.3V648.8M664.5 683.5V740.5M665.5 569.9V634.7M665.5 693.8V742.3M666.5 569.5V611.6M666.5 659.5V745.1M667.5 569.3V616.4M667.5 692.9V740.2M668.5 559.8V613.5M668.5 690.2V770.0M669.5 558.7V622.5M669.5 677.7V755.9M670.5 534.6V646.2M670.5 682.4V750.6M671.5 545.0V630.9M671.5 681.6V751.6M672.5 552.4V630.1M672.5 676.1V750.4M673.5 564.0V650.3M673.5 684.8V750.8M674.5 545.7V628.7M674.5 677.8V750.8M675.5 547.7V650.2M675.5 682.6V755.1M676.5 542.7V630.8M676.5 661.4V750.3M677.5 558.4V636.7M677.5 660.5V749.8M678.5 536.8V625.4M678.5 683.5V766.0M679.5 556.3V628.3M679.5 683.5V770.7M680.5 559.5V641.7M680.5 683.4V738.7M681.5 556.4V646.6M681.5 664.7V749.3M682.5 555.0V625.4M682.5 682.5V764.6M683.5 543.0V647.2M683.5 664.9V750.4M684.5 537.0V624.5M684.5 683.1V754.6M685.5 554.7V625.6M685.5 681.2V755.2M686.5 560.6V624.5M686.5 682.5V750.8M687.5 559.8V629.4M687.5 659.0V748.3M688.5 561.3V634.1M688.5 680.7V749.3M689.5 552.8V624.5M689.5 659.0V751.5M690.5 556.0V636.5M690.5 684.4V761.9M691.5 546.1V643.8M691.5 684.8V749.4M692.5 549.5V630.7M692.5 666.4V767.4M693.5 561.5V643.3M693.5 680.1V774.6M694.5 547.2V624.0M694.5 684.9V758.3M695.5 549.6V622.9M695.5 686.1V742.8M696.5 535.7V631.0M696.5 658.3V746.9M697.5 562.0V636.3M697.5 667.5V754.5M698.5 562.7V643.2M698.5 679.1V758.9M699.5 562.7V642.3M699.5 679.0V775.3M700.5 568.2V622.7M700.5 677.0V750.1M701.5 560.3V622.4M701.5 658.2V748.9M702.5 534.6V616.4M702.5 670.5V774.7M703.5 572.6V618.9M703.5 665.0V746.7M704.5 558.6V622.6M704.5 673.3V746.0M705.5 535.5V628.0M705.5 680.5V747.5M706.5 563.6V642.3M706.5 670.5V747.9M707.5 549.1V632.1M707.5 659.2V765.6M708.5 544.2V622.0M708.5 684.6V746.0M709.5 573.5V621.4M709.5 687.6V775.7M710.5 537.9V642.2M710.5 667.7V769.6M711.5 561.7V651.0M711.5 682.3V752.2M712.5 553.0V625.2M712.5 685.7V746.3M713.5 560.7V622.5M713.5 685.4V766.4M714.5 574.1V620.9M714.5 661.8V766.5M715.5 541.8V644.3M715.5 660.3V745.7M716.5 554.4V620.7M716.5 686.0V750.5M717.5 534.4V615.4M717.5 688.4V748.8M718.5 564.6V621.6M718.5 683.8V745.6M719.5 544.7V646.4M719.5 684.7V763.1M720.5 541.7V632.7M720.5 664.4V744.5M721.5 566.8V630.0M721.5 688.7V745.5M722.5 548.4V629.5M722.5 663.0V740.0M723.5 558.2V615.5M723.5 674.2V773.8M724.5 535.1V638.8M724.5 664.9V755.7M725.5 555.1V629.3M725.5 689.0V744.6M726.5 564.9V645.5M726.5 685.7V774.2M727.5 565.2V631.9M727.5 694.8V746.4M728.5 547.0V632.7M728.5 696.4V744.3M729.5 569.3V629.3M729.5 681.9V744.6M730.5 553.0V620.9M730.5 674.3V750.5M731.5 558.3V623.8M731.5 682.8V743.9M732.5 564.8V630.4M732.5 687.0V756.9M733.5 552.8V619.6M733.5 679.6V763.0M734.5 564.7V642.9M734.5 683.5V774.2M735.5 543.6V648.1M735.5 688.1V743.9M736.5 561.2V627.2M736.5 661.4V744.9M737.5 565.8V623.4M737.5 678.1V774.7M738.5 564.6V650.4M738.5 678.6V745.8M739.5 556.8V650.3M739.5 689.8V771.6M740.5 562.9V614.3M740.5 679.5V745.9M741.5 534.3V623.7M741.5 691.2V769.8M742.5 564.3V622.5M742.5 686.4V744.5M743.5 567.4V611.2M743.5 689.6V746.0M744.5 571.9V613.4M744.5 689.3V743.7M745.5 567.2V618.8M745.5 692.9V740.1M746.5 569.9V614.6M746.5 703.7V732.0M751.5 570.8V608.5M751.5 698.4V730.8M752.5 562.3V616.3M752.5 688.9V742.5M753.5 564.5V628.6M753.5 686.6V753.6M754.5 559.1V624.5M754.5 678.0V751.2M755.5 556.1V634.2M755.5 678.0V753.0M756.5 552.4V635.4M756.5 676.0V762.4M757.5 547.0V639.3M757.5 676.5V761.2M758.5 534.2V650.3M758.5 660.7V771.6M759.5 547.9V637.7M759.5 674.3V757.6M760.5 548.5V625.9M760.5 684.0V760.9M761.5 547.7V631.3M761.5 675.2V775.8M762.5 548.6V623.6M762.5 668.3V772.7M763.5 542.3V631.4M763.5 671.7V762.7M764.5 548.2V639.1M764.5 672.1V749.4M765.5 538.0V637.0M765.5 672.7V766.3M766.5 549.0V636.2M766.5 670.2V772.8M767.5 548.8V637.7M767.5 660.7V765.9M768.5 548.7V642.0M768.5 669.3V762.3M769.5 545.0V638.9M769.5 658.7V763.2M770.5 548.4V651.7M770.5 657.6V761.3M771.5 544.2V635.8M771.5 673.1V770.6M772.5 544.1V640.5M772.5 671.7V760.0M773.5 540.3V642.2M773.5 671.6V762.1M774.5 534.5V642.0M774.5 668.3V755.4M775.5 551.3V635.5M775.5 657.4V766.2M776.5 549.1V635.4M776.5 673.6V775.9M777.5 548.4V644.3M777.5 666.6V760.7M778.5 550.0V639.2M778.5 672.6V759.5M779.5 549.1V639.5M779.5 671.4V775.7M780.5 550.2V636.0M780.5 671.4V768.2M781.5 533.6V651.1M781.5 657.5V763.1M782.5 548.6V650.7M782.5 658.8V775.8M783.5 549.0V650.7M783.5 665.9V768.5M784.5 547.2V648.1M784.5 672.5V750.0M785.5 550.4V638.7M785.5 674.3V771.7M786.5 534.1V634.5M786.5 674.4V773.0M787.5 534.4V639.9M787.5 673.9V760.1M788.5 544.2V650.5M788.5 668.0V760.0M789.5 537.0V650.3M789.5 674.7V775.2M790.5 536.3V647.3M790.5 674.6V759.4M791.5 550.9V634.4M791.5 689.2V771.7M792.5 551.1V634.3M792.5 679.8V775.5M793.5 534.7V651.0M793.5 670.4V759.6M794.5 534.2V644.0M794.5 672.8V754.1M795.5 559.9V650.2M795.5 658.2V751.2M796.5 554.0V627.7M796.5 678.6V749.7M797.5 557.6V627.0M797.5 665.9V749.7M798.5 545.9V636.8M798.5 683.7V761.3M799.5 560.0V625.3M799.5 683.5V755.4M800.5 558.3V633.4M800.5 683.9V749.3M801.5 554.8V650.7M801.5 666.2V752.1M802.5 559.3V620.2M802.5 677.7V755.0M803.5 556.9V625.3M803.5 683.7V756.9M804.5 559.4V633.9M804.5 683.4V774.4M805.5 534.7V625.1M805.5 683.5V745.2M806.5 558.6V619.7M806.5 690.4V749.6M807.5 560.3V627.6M807.5 679.7V775.0M808.5 539.6V650.0M808.5 675.8V749.4M809.5 560.1V632.9M809.5 683.9V765.2M810.5 550.1V625.1M810.5 658.2V753.3M811.5 557.1V636.1M811.5 683.8V749.3M812.5 556.5V627.2M812.5 684.8V749.8M813.5 559.8V626.3M813.5 683.3V749.5M814.5 533.9V629.3M814.5 660.4V775.2M815.5 538.1V647.1M815.5 658.6V773.3M816.5 535.1V647.4M816.5 659.2V771.3M817.5 533.9V650.8M817.5 662.1V772.3M818.5 538.3V651.3M818.5 661.9V775.9M819.5 533.8V651.7M819.5 660.6V771.3M820.5 534.6V647.2M820.5 657.4V774.5M821.5 536.2V647.2M821.5 661.7V776.0M822.5 535.7V651.4M822.5 661.5V771.9M823.5 555.8V651.5M823.5 657.2V775.9M824.5 534.5V647.5M824.5 657.3V772.1M825.5 537.7V648.6M825.5 661.9V775.9M826.5 533.6V647.2M826.5 661.9V775.9M827.5 537.4V651.7M827.5 659.0V771.8M828.5 535.8V647.0M828.5 657.3V771.2M829.5 537.3V648.2M829.5 661.4V772.8M830.5 540.3V629.8M830.5 660.3V771.8M831.5 535.5V647.0M831.5 661.9V771.6M832.5 538.2V647.2M832.5 657.6V775.9M833.5 538.1V651.5M833.5 658.8V775.4M834.5 537.2V651.4M834.5 657.3V771.3M835.5 536.9V651.0M835.5 657.4V771.9M836.5 533.8V647.6M836.5 670.6V772.0M837.5 533.9V648.8M837.5 661.8V775.6M838.5 540.3V648.4M838.5 673.7V772.4M839.5 537.5V647.8M839.5 661.9V764.3M840.5 533.7V635.7M840.5 662.0V773.9M841.5 551.7V631.1M841.5 662.0V773.3M842.5 535.3V647.0M842.5 661.4V774.2M843.5 547.9V647.0M843.5 657.6V775.2M844.5 534.3V651.4M844.5 661.4V772.9M845.5 546.1V647.0M845.5 661.5V771.3M846.5 536.2V649.0M846.5 661.4V772.5M852.5 533.7V649.7M852.5 663.0V773.7M853.5 549.4V650.0M853.5 663.1V770.1M854.5 539.4V645.8M854.5 657.4V772.6M855.5 533.7V646.3M855.5 663.1V770.7M856.5 539.4V642.5M856.5 661.5V770.1M857.5 533.9V643.6M857.5 658.5V771.1M858.5 539.3V651.5M858.5 657.3V772.0M859.5 539.3V646.1M859.5 662.9V771.8M860.5 539.2V651.4M860.5 657.3V775.6M861.5 539.3V649.2M861.5 658.5V770.4M862.5 539.4V638.8M862.5 662.3V755.9M863.5 538.4V648.9M863.5 657.6V770.7M864.5 536.3V649.3M864.5 676.7V770.8M865.5 533.6V651.3M865.5 657.6V774.8M866.5 534.5V645.8M866.5 659.0V775.9M867.5 533.9V646.4M867.5 663.1V775.5M868.5 538.2V650.0M868.5 657.4V770.3M869.5 545.3V647.7M869.5 658.9V771.3M870.5 534.3V646.1M870.5 662.8V775.9M871.5 539.4V651.6M871.5 657.3V775.5M872.5 534.6V644.1M872.5 657.4V770.7M873.5 537.1V651.5M873.5 657.4V770.4M874.5 533.9V651.5M874.5 670.4V755.0M875.5 539.3V651.6M875.5 672.8V776.0M876.5 533.6V651.4M876.5 657.4V771.1M877.5 562.3V625.2M877.5 658.2V771.8M878.5 534.9V629.6M878.5 684.3V774.4M879.5 545.4V636.5M879.5 679.5V752.5M880.5 536.9V612.5M880.5 666.3V746.3M881.5 557.6V623.7M881.5 659.8V757.7M882.5 567.2V644.9M882.5 686.8V747.2M883.5 562.7V625.8M883.5 679.7V746.5M884.5 557.5V624.2M884.5 682.7V775.7M885.5 553.1V650.6M885.5 680.8V751.6M886.5 552.0V650.8M886.5 686.7V772.7M887.5 545.8V623.4M887.5 657.9V746.6M888.5 553.6V622.2M888.5 660.8V750.3M889.5 535.6V626.5M889.5 669.4V747.0M890.5 548.1V623.2M890.5 680.0V746.5M891.5 562.1V622.4M891.5 674.0V762.5M892.5 533.6V645.9M892.5 660.8V759.0M893.5 537.7V649.0M893.5 662.1V775.8M894.5 534.2V646.5M894.5 661.2V770.1M895.5 538.8V639.5M895.5 662.8V770.6M896.5 538.6V651.4M896.5 663.0V774.3M897.5 538.1V646.5M897.5 658.6V772.4M898.5 549.0V646.1M898.5 657.4V773.5M899.5 538.5V648.6M899.5 662.5V775.6M900.5 535.4V651.2M900.5 674.4V770.2M901.5 535.1V648.1M901.5 661.8V770.1M902.5 536.1V651.7M902.5 657.5V772.3M903.5 538.8V649.3M903.5 657.6V773.1M904.5 538.2V645.8M904.5 677.1V772.6M905.5 544.5V629.0M905.5 661.2V768.3M906.5 536.4V645.8M906.5 663.1V770.1M907.5 538.8V651.5M907.5 658.4V770.1M908.5 538.8V651.0M908.5 678.8V770.1M909.5 538.9V628.4M909.5 662.2V775.5M910.5 534.2V646.0M910.5 661.9V772.1M911.5 537.6V647.8M911.5 657.3V775.8M912.5 533.5V645.8M912.5 662.2V770.2M913.5 535.6V647.1M913.5 663.1V773.8M914.5 537.0V649.4M914.5 663.0V774.1M915.5 534.0V647.6M915.5 657.7V772.0M916.5 562.1V638.6M916.5 698.0V763.8M917.5 579.8V611.6M917.5 665.4V734.6M918.5 546.5V611.2M918.5 661.7V744.8M919.5 540.0V640.5M919.5 679.1V747.0M920.5 562.0V622.2M920.5 692.5V758.6M921.5 538.3V622.7M921.5 669.9V737.6M922.5 547.7V650.3M922.5 690.0V746.4M923.5 534.2V633.4M923.5 686.8V747.4M924.5 554.9V644.4M924.5 686.6V768.1M925.5 545.2V633.0M925.5 663.9V738.0M926.5 538.0V622.7M926.5 674.7V756.9M927.5 540.7V622.2M927.5 670.4V751.5M928.5 562.7V623.0M928.5 672.8V774.6M929.5 559.7V622.2M929.5 677.5V771.7M930.5 543.6V649.9M930.5 686.7V751.2M931.5 557.8V622.2M931.5 666.5V748.7M932.5 534.4V649.0M932.5 659.5V773.6M933.5 536.5V651.7M933.5 659.8V775.8M934.5 536.5V648.5M934.5 660.2V772.8M935.5 536.5V630.0M935.5 660.1V772.7M936.5 533.9V648.4M936.5 660.1V772.6M937.5 535.2V651.4M937.5 660.6V775.7M938.5 535.4V648.2M938.5 657.4V774.7M939.5 537.1V650.4M939.5 658.7V772.6M940.5 537.2V649.3M940.5 660.3V775.1M941.5 533.7V651.6M941.5 661.1V776.0M942.5 533.6V649.5M942.5 661.0V772.1M943.5 537.5V648.1M943.5 661.1V771.9M944.5 536.9V648.7M944.5 661.3V771.8M945.5 533.5V648.9M945.5 661.4V772.1M946.5 537.8V632.9M946.5 660.8V775.0M947.5 533.8V647.4M947.5 665.8V776.0M948.5 533.6V647.1M948.5 660.8V775.7M949.5 537.5V647.9M949.5 661.7V772.0M950.5 537.8V647.2M950.5 667.2V774.7M951.5 537.0V649.9M951.5 660.7V773.0M952.5 538.0V647.6M952.5 661.7V770.9M953.5 534.6V649.1M953.5 657.6V772.4M954.5 534.2V633.2M954.5 659.1V775.8M955.5 533.9V646.8M955.5 657.8V775.6M956.5 536.1V651.7M956.5 661.4V775.7M957.5 538.0V646.5M957.5 661.9V771.5M958.5 539.1V635.8M958.5 662.9V775.6M959.5 537.4V646.1M959.5 659.0V774.3M960.5 539.4V651.4M960.5 657.7V775.8M961.5 535.3V643.0M961.5 659.4V758.1M962.5 555.1V637.8M962.5 669.9V754.8M963.5 556.7V630.6M963.5 686.9V752.4M964.5 555.0V622.0M964.5 687.3V745.9M965.5 560.8V628.8M965.5 678.5V753.9M966.5 555.3V612.0M966.5 681.3V748.5M967.5 560.0V625.0M967.5 688.3V745.7M968.5 557.0V626.9M968.5 689.0V749.2M969.5 562.5V625.9M969.5 685.9V749.5M970.5 557.5V625.2M970.5 688.1V751.9M971.5 572.9V611.4M971.5 696.6V740.7M972.5 576.1V608.3M972.5 702.4V734.1M973.5 585.0V597.1M973.5 709.0V721.6" stroke="#3a72d7" stroke-width="1" fill="none"/>
<rect x="9" y="524.7" width="2" height="246" fill="#d24a62"/>
<path d="M6.5 764.6 L16.9 774.2 L16.9 784.5 L6.5 784.5Z" fill="#8e8e8e"/><text x="9.5" y="782.3" font-size="8.5" font-weight="bold" fill="#fff" font-family="Liberation Sans">1</text><path d="M92.6 764.6 L103.0 774.2 L103.0 784.5 L92.6 784.5Z" fill="#8e8e8e"/><text x="95.6" y="782.3" font-size="8.5" font-weight="bold" fill="#fff" font-family="Liberation Sans">1</text><path d="M200.2 764.6 L210.6 774.2 L210.6 784.5 L200.2 784.5Z" fill="#8e8e8e"/><text x="203.2" y="782.3" font-size="8.5" font-weight="bold" fill="#fff" font-family="Liberation Sans">1</text><path d="M269.9 764.6 L280.3 774.2 L280.3 784.5 L269.9 784.5Z" fill="#8e8e8e"/><text x="272.9" y="782.3" font-size="8.5" font-weight="bold" fill="#fff" font-family="Liberation Sans">1</text><path d="M379.6 764.6 L390.0 774.2 L390.0 784.5 L379.6 784.5Z" fill="#8e8e8e"/><text x="382.6" y="782.3" font-size="8.5" font-weight="bold" fill="#fff" font-family="Liberation Sans">1</text><path d="M506.9 764.6 L517.3 774.2 L517.3 784.5 L506.9 784.5Z" fill="#8e8e8e"/><text x="509.9" y="782.3" font-size="8.5" font-weight="bold" fill="#fff" font-family="Liberation Sans">1</text><path d="M591.6 764.6 L602.0 774.2 L602.0 784.5 L591.6 784.5Z" fill="#8e8e8e"/><text x="594.6" y="782.3" font-size="8.5" font-weight="bold" fill="#fff" font-family="Liberation Sans">1</text><path d="M749.6 764.6 L760.0 774.2 L760.0 784.5 L749.6 784.5Z" fill="#8e8e8e"/><text x="752.6" y="782.3" font-size="8.5" font-weight="bold" fill="#fff" font-family="Liberation Sans">1</text><path d="M850.1 764.6 L860.5 774.2 L860.5 784.5 L850.1 784.5Z" fill="#8e8e8e"/><text x="853.1" y="782.3" font-size="8.5" font-weight="bold" fill="#fff" font-family="Liberation Sans">1</text>
</svg>
</div>

<div id="slider"></div>
<div id="knob"></div>
<div id="timebox"><div id="time">00:09</div></div>
<div id="reg">Registered to Pieter Stenekes - Sonoris Audio Engineering</div>

<!-- right panel -->
<div class="lbl" style="right:166px;top:80.5px">Title</div>
<div class="lbl" style="right:166px;top:112.5px">Performer</div>
<div class="lbl" style="right:166px;top:144.5px">MCN</div>
<div class="lbl" style="right:166px;top:176.5px">Edit</div>
<div class="inp" style="top:77.5px">Fire Burning</div>
<div class="inp" style="top:109.5px">Hot Shots</div>
<div class="inp" style="top:141.3px;letter-spacing:0.45px">0813285908925</div>
<div class="btn" style="left:1054px;width:61px">CD Text</div>
<div class="btn" style="left:1121.5px;width:60.5px">Project</div>
<div class="lbl" style="left:1023.5px;top:208.5px;text-align:left">Total Length</div>
<div class="lbl" style="left:1112.5px;top:208.5px;text-align:left;letter-spacing:-0.3px">51:56:67</div>

<svg class="abs" style="left:0;top:0" width="1214" height="875">
 <!-- rewind -->
 <path d="M1018 270.3 L1031 263.9 L1031 276.7Z M1030.5 270.3 L1043 263.9 L1043 276.7Z" fill="#505050"/>
 <rect x="1059.3" y="257.3" width="5.7" height="26" fill="#505050"/>
 <rect x="1069.2" y="257.3" width="5.8" height="26" fill="#505050"/>
 <path d="M1116 270.3 L1103 263.9 L1103 276.7Z M1103.5 270.3 L1091 263.9 L1091 276.7Z" fill="#505050"/>
 <!-- play selection -->
 <path d="M1146 258.8 H1154.5 V261.8 M1154.5 278.8 V282.2 H1146 M1171.3 258.8 H1163 V265.5 M1163 275 V282.2 H1171.3" stroke="#6a6a6a" stroke-width="1.7" fill="none"/>
 <path d="M1151 262.6 L1165.6 270.1 L1151 277.6Z" fill="#c80000"/>
 <!-- meters -->
 <defs>
  <linearGradient id="gL" x1="0" y1="347" x2="0" y2="763" gradientUnits="userSpaceOnUse">
   <stop offset="0" stop-color="#7c1214"/><stop offset="0.086" stop-color="#7c1214"/>
   <stop offset="0.087" stop-color="#8a3a14"/><stop offset="0.12" stop-color="#d8c020"/><stop offset="0.2" stop-color="#d6d92a"/><stop offset="0.25" stop-color="#9ad42a"/><stop offset="0.32" stop-color="#2ad22a"/><stop offset="1" stop-color="#2ad22a"/>
  </linearGradient>
  <linearGradient id="gR" x1="0" y1="347" x2="0" y2="763" gradientUnits="userSpaceOnUse">
   <stop offset="0" stop-color="#7c1214"/><stop offset="0.063" stop-color="#7c1214"/>
   <stop offset="0.064" stop-color="#e07020"/><stop offset="0.11" stop-color="#d8c020"/><stop offset="0.2" stop-color="#d6d92a"/><stop offset="0.25" stop-color="#9ad42a"/><stop offset="0.32" stop-color="#2ad22a"/><stop offset="1" stop-color="#2ad22a"/>
  </linearGradient>
  <linearGradient id="gM" x1="0" y1="347" x2="0" y2="763" gradientUnits="userSpaceOnUse">
   <stop offset="0" stop-color="#7c1214"/><stop offset="0.173" stop-color="#7c1214"/>
   <stop offset="0.174" stop-color="#e02020"/><stop offset="0.224" stop-color="#e07020"/><stop offset="0.25" stop-color="#d8d020"/><stop offset="0.31" stop-color="#d0d828"/><stop offset="0.345" stop-color="#2ad22a"/><stop offset="1" stop-color="#2ad22a"/>
  </linearGradient>
 </defs>
 <rect x="1060.8" y="320.2" width="6.1" height="20.8" fill="#7c1214"/>
 <rect x="1072.3" y="320.2" width="6.3" height="20.8" fill="#7c1214"/>
 <rect x="1060.8" y="347.3" width="6.1" height="415.7" fill="url(#gL)"/>
 <rect x="1072.3" y="347.3" width="6.3" height="415.7" fill="url(#gR)"/>
 <rect x="1121.1" y="347.3" width="6.6" height="415.7" fill="url(#gM)"/>
</svg>
<div class="ml" style="right:159px;top:341.5px">0</div>
<div class="ml" style="right:159px;top:478.5px">-20</div>
<div class="ml" style="right:159px;top:619px">-40</div>
<div class="ml" style="right:159px;top:758px">-60</div>
<div class="ml" style="left:1105.5px;top:325.5px">-16.0 (I)</div>
<div class="ml" style="right:98.5px;top:341.5px">-5</div>
<div class="ml" style="right:98.5px;top:387.5px">-11</div>
<div class="ml" style="right:98.5px;top:433px">-17</div>
<div class="ml" style="right:98.5px;top:478.5px">-23</div>
<div class="ml" style="right:98.5px;top:758px">-59</div>
<div class="ml" style="left:1061px;top:775px;font-size:11px;letter-spacing:0">L</div>
<div class="ml" style="left:1072px;top:775px;font-size:11px;letter-spacing:0">R</div>
<div class="ml" style="left:1120px;top:775px;font-size:11px;letter-spacing:0">M</div>

<!-- checkbox -->
<svg class="abs" style="left:1056px;top:806px" width="22" height="22">
 <defs><linearGradient id="cbg" x1="0" y1="0" x2="0" y2="1"><stop offset="0" stop-color="#4a86ee"/><stop offset="1" stop-color="#2f66d8"/></linearGradient></defs>
 <circle cx="9.6" cy="12.4" r="7.5" fill="url(#cbg)"/>
 <path d="M5.6 9.4 L10 17.6 L16.4 2.8" stroke="#fff" stroke-width="2.2" fill="none"/>
</svg>
<div class="lbl" style="left:1081.5px;top:809.5px;text-align:left">Table Locked</div>
</body></html>
